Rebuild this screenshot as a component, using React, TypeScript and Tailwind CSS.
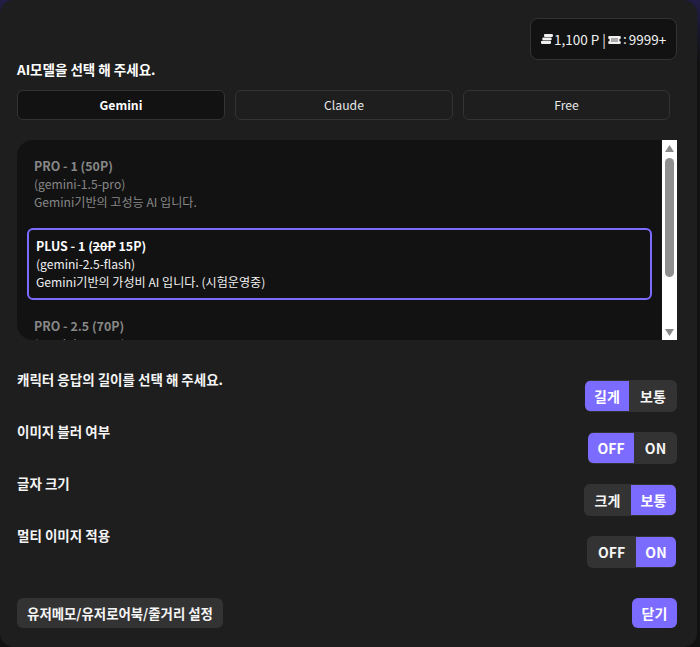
const FONT = "font-['Noto_Sans_CJK_KR','Noto_Sans',sans-serif]";

function Coins() {
  return (
    <svg width="12" height="10" viewBox="0 0 12 10" className="shrink-0" fill="#f0f0f0">
      <path d="M4 0h6.5a1.5 1 0 0 1 1.5 1v1a1.5 1 0 0 1-1 .9H4.2a1.5 1 0 0 1-1.2-1V1a1.5 1 0 0 1 1-1z" />
      <path d="M2.5 3.4h7a1.3 1 0 0 1 1.2 1v.8a1.3 1 0 0 1-1.2 1h-7a1.3 1 0 0 1-1.2-1v-.8a1.3 1 0 0 1 1.2-1z" />
      <path d="M1.2 6.8h7.6a1.2 1 0 0 1 1.2 1V9a1.2 1 0 0 1-1.2 1H1.2A1.2 1 0 0 1 0 9V7.8a1.2 1 0 0 1 1.2-1z" />
    </svg>
  );
}

function Ticket() {
  return (
    <svg width="13" height="8" viewBox="0 0 13 8" className="shrink-0 mt-[1px] ml-[2px]" fill="#f0f0f0">
      <path d="M1 0h11l.8.7v1.8a1.5 1.5 0 0 0 0 3v1.8L12 8H1l-.8-.7V5.5a1.5 1.5 0 0 0 0-3V.7z" />
      <rect x="3" y="2" width="7" height="4" fill="#555555" opacity="0.45" />
    </svg>
  );
}

function Toggle({
  a,
  b,
  on,
  className,
}: {
  a: string;
  b: string;
  on: 0 | 1;
  className: string;
}) {
  const base = "flex items-center justify-center h-[30px] text-[14px] font-bold";
  return (
    <div className={`flex rounded-md overflow-hidden bg-[#333333] py-px mt-[10px] ${className}`}>
      <div className={`${base} ${on === 0 ? "bg-[#7c6bff] text-white rounded-l-[5px]" : "text-[#f5f5f5]"}`}>{a}</div>
      <div className={`${base} ${on === 1 ? "bg-[#7c6bff] text-white rounded-r-[5px]" : "text-[#f5f5f5]"}`}>{b}</div>
    </div>
  );
}

function Row({ label, children, className }: { label: string; children: React.ReactNode; className: string }) {
  return (
    <div className={`flex justify-between items-start ${className}`}>
      <div className="-mt-px text-[13.5px] leading-[20px] font-bold text-[#f5f5f5]">{label}</div>
      {children}
    </div>
  );
}

function Tab({ label, active, className }: { label: string; active?: boolean; className: string }) {
  return (
    <div
      className={`h-[30px] flex items-center justify-center rounded-md border border-[#333333] text-[12.2px] ${className} ${
        active ? "bg-[#121212] font-bold text-white" : "text-[#e8e8e8]"
      }`}
    >
      {label}
    </div>
  );
}

export default function App() {
  return (
    <div className={`w-[700px] h-[647px] overflow-hidden bg-gradient-to-b from-[#221d45] to-[#111111] to-[10%] ${FONT}`}>
      <div className="w-[697px] h-[647px] bg-[#1e1e1e] rounded-[14px] pl-[17px] pr-[20px] pt-[18px] text-[#f0f0f0]">
        <div className="flex justify-end">
          <div className="h-[42px] w-[147px] pl-[10px] flex items-center rounded-lg border border-[#333333] bg-[#121212] text-[13.5px] text-[#f0f0f0]">
            <Coins />
            <span className="ml-[1px]">1,100 P |</span>
            <Ticket />
            <span className="ml-[2px] -mt-[2px]">:</span>
            <span className="ml-[2px]">9999+</span>
          </div>
        </div>

        <div className="-mt-[1px] text-[13.5px] leading-[20px] font-bold text-white">AI모델을 선택 해 주세요.</div>

        <div className="mt-[11px] flex gap-[10px]">
          <Tab label="Gemini" active className="w-[208px]" />
          <Tab label="Claude" className="w-[218px]" />
          <Tab label="Free" className="w-[207px]" />
        </div>

        <div className="mt-[20px] h-[200px] flex bg-[#121212] rounded-l-[16px] overflow-hidden">
          <div className="flex-1 min-w-0 overflow-hidden pl-[10px] pr-[10px]">
            <div className="pt-[17px] pl-[7px] pb-[10px] text-[12.1px] leading-[18px] text-[#888888]">
              <div className="font-bold text-[12.4px]">PRO - 1 (50P)</div>
              <div>(gemini-1.5-pro)</div>
              <div>Gemini기반의 고성능 AI 입니다.</div>
            </div>
            <div className="mt-[7px] h-[72px] rounded-md border-2 border-[#7c6bff] pl-[7px] pt-[7px] text-[12.1px] leading-[18px] text-[#f0f0f0]">
              <div className="font-bold text-[12.4px] text-white">
                PLUS - 1 (<span className="line-through">20P</span> 15P)
              </div>
              <div>(gemini-2.5-flash)</div>
              <div>Gemini기반의 가성비 AI 입니다. (시험운영중)</div>
            </div>
            <div className="pt-[17px] pl-[7px] text-[12.1px] leading-[18px] text-[#888888]">
              <div className="font-bold text-[12.4px]">PRO - 2.5 (70P)</div>
              <div>(gemini-2.5-pro)</div>
            </div>
          </div>
          <div className="w-[15px] shrink-0 bg-white flex flex-col items-center pt-[5px] pb-[4px]">
            <svg width="9" height="7" viewBox="0 0 9 7" fill="#8a8a8a">
              <path d="M4.5 0l4.5 7H0z" />
            </svg>
            <div className="mt-[6px] w-[9px] h-[119px] rounded-full bg-[#8f8f8f]" />
            <div className="flex-1" />
            <svg width="9" height="7" viewBox="0 0 9 7" fill="#8a8a8a">
              <path d="M4.5 7L9 0H0z" />
            </svg>
          </div>
        </div>

        <Row label="캐릭터 응답의 길이를 선택 해 주세요." className="mt-[30px]">
          <Toggle a="길게" b="보통" on={0} className="[&>div:first-child]:w-[44px] [&>div:last-child]:w-[48px]" />
        </Row>
        <Row label="이미지 블러 여부" className="mt-[10px]">
          <Toggle a="OFF" b="ON" on={0} className="[&>div:first-child]:w-[46px] [&>div:last-child]:w-[43px]" />
        </Row>
        <Row label="글자 크기" className="mt-[10px]">
          <Toggle a="크게" b="보통" on={1} className="mr-px [&>div:first-child]:w-[47px] [&>div:last-child]:w-[45px]" />
        </Row>
        <Row label="멀티 이미지 적용" className="mt-[10px]">
          <Toggle a="OFF" b="ON" on={1} className="mr-px [&>div:first-child]:w-[49px] [&>div:last-child]:w-[40px]" />
        </Row>

        <div className="mt-[30px] flex justify-between items-center">
          <div className="h-[30px] w-[206px] flex items-center justify-center rounded-md bg-[#333333] text-[13.4px] font-bold text-[#f5f5f5]">
            유저메모/유저로어북/줄거리 설정
          </div>
          <div className="h-[30px] w-[45px] flex items-center justify-center rounded-md bg-[#7c6bff] text-[14px] font-bold text-white">
            닫기
          </div>
        </div>
      </div>
    </div>
  );
}
